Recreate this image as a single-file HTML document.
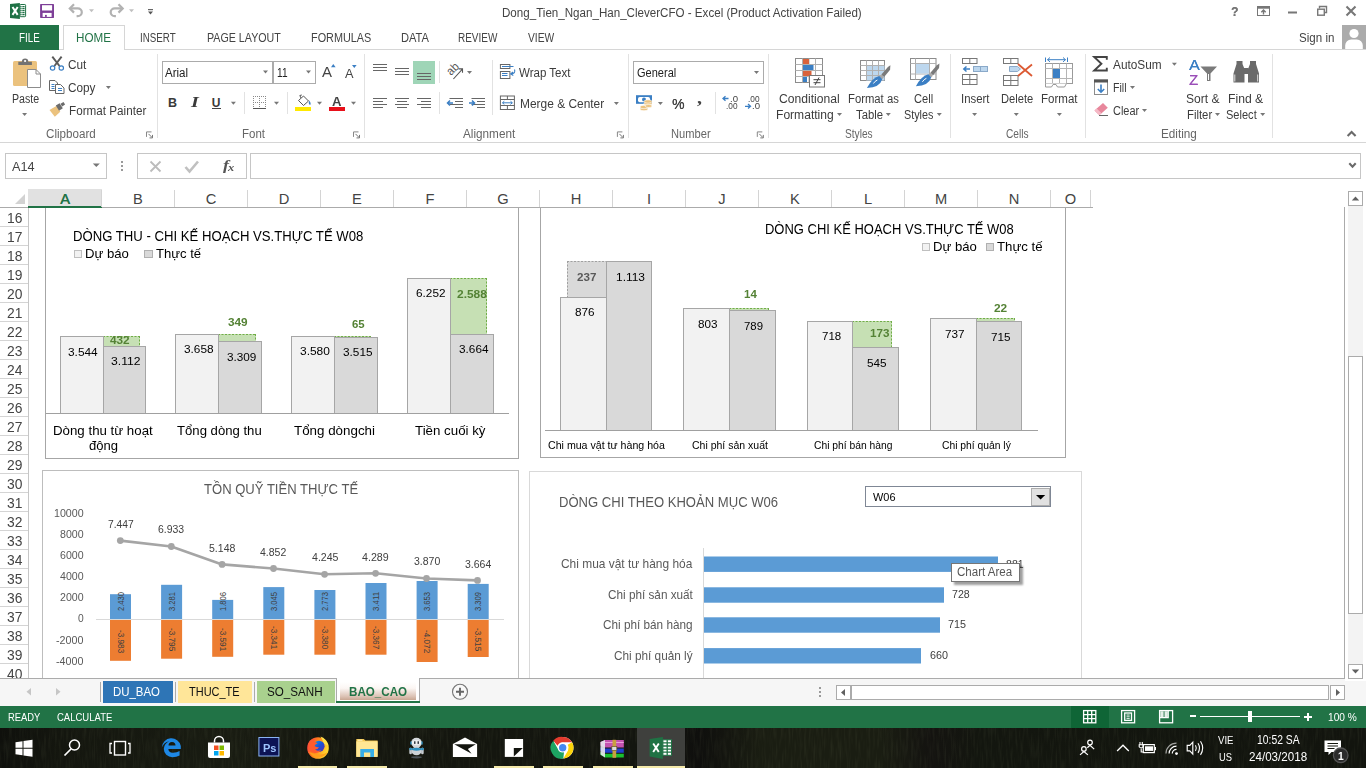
<!DOCTYPE html>
<html><head><meta charset="utf-8">
<style>
*{box-sizing:border-box;margin:0;padding:0}
html,body{width:1366px;height:768px;overflow:hidden;background:#fff}
body{font-family:"Liberation Sans",sans-serif;font-size:12px;color:#444;position:relative}
.a{position:absolute}
.t{position:absolute;white-space:nowrap;line-height:1}
svg{position:absolute;left:0;top:0;overflow:visible;pointer-events:none}
</style></head><body>
<span class="t" style="left:502.00px;top:7.00px;font-size:12.00px;color:#444;transform:scaleX(0.9660);transform-origin:0 0;">Dong_Tien_Ngan_Han_CleverCFO - Excel (Product Activation Failed)</span><svg width="1366" height="768" viewBox="0 0 1366 768"><path d="M10 4L19.900 3V18.900L10 18z" fill="#1e7145"/><rect x="19.900" y="4.500" width="5.700" height="12.200" rx=".8" fill="#fff" stroke="#1e7145" stroke-width="1"/><path d="M20.300 6.600h1.300M22.300 6.600h2.300M20.300 8.600h1.300M22.300 8.600h2.300M20.300 10.600h1.300M22.300 10.600h2.300M20.300 12.600h1.300M22.300 12.600h2.300M20.300 14.600h1.300M22.300 14.600h2.300" stroke="#1e7145" stroke-width="1.200" fill="none"/><path d="M12.500 7l5.200 7.900M17.700 7l-5.200 7.900" stroke="#fff" stroke-width="2" fill="none"/><rect x="40.100" y="4" width="13.900" height="13.900" rx=".6" fill="#7e3f98"/><rect x="42" y="5.200" width="10.100" height="5.300" fill="#fff"/><rect x="42.600" y="12.900" width="9" height="4" fill="#fff"/><rect x="45" y="14.900" width="1.800" height="2" fill="#7e3f98"/><path d="M71 8.400 h6.800 a4 3.900 0 0 1 0 7.800 h-1.200" fill="none" stroke="#b2b2b2" stroke-width="2.2"/><path d="M74 4.200 L69.800 8.400 L74 12.600" fill="none" stroke="#b2b2b2" stroke-width="2.2"/><path d="M121.500 8.400 h-6.800 a4 3.900 0 0 0 0 7.800 h1.200" fill="none" stroke="#b2b2b2" stroke-width="2.2"/><path d="M118.500 4.200 L122.700 8.400 L118.500 12.600" fill="none" stroke="#b2b2b2" stroke-width="2.2"/><path d="M89.0 9.3h5.0l-2.5 3.0z" fill="#c0c0c0"/><path d="M129.0 9.3h5.0l-2.5 3.0z" fill="#c0c0c0"/><rect x="148" y="9" width="5" height="1.2" fill="#666"/><path d="M148.0 11.5h5.0l-2.5 3.0z" fill="#555"/></svg><span class="t" style="left:1231.00px;top:5.00px;font-size:13.20px;color:#777;font-weight:bold;transform:scaleX(0.9054);transform-origin:0 0;text-shadow:.4px 0 0 #777;">?</span><svg width="1366" height="768" viewBox="0 0 1366 768"><rect x="1257.5" y="6.5" width="12" height="9" fill="none" stroke="#777" stroke-width="1"/><rect x="1257.500" y="6.500" width="12" height="2.200" fill="#777"/><path d="M1263.500 14.500v-4.300M1261.300 12.300l2.200-2.200 2.200 2.200" stroke="#777" stroke-width="1.400" fill="none"/><rect x="1288" y="11.5" width="9" height="2" fill="#777"/><path d="M1319.5 8.5v-2h7v6h-2" fill="none" stroke="#777" stroke-width="1.4"/><rect x="1317.7" y="9.2" width="6.6" height="6" fill="none" stroke="#777" stroke-width="1.4"/><path d="M1346.5 6.5l9 9M1355.5 6.5l-9 9" stroke="#777" stroke-width="2.100" fill="none"/></svg><div class="a" style="left:0.00px;top:49.00px;width:1366.00px;height:1.00px;background:#d6d6d6;"></div><div class="a" style="left:0.00px;top:25.00px;width:59.00px;height:25.00px;background:#217346;"></div><div class="a" style="left:63.00px;top:25.00px;width:62.00px;height:25.00px;background:#fff;border:1px solid #d6d6d6;border-bottom:none;"></div><span class="t" style="left:19.30px;top:32.00px;font-size:12.00px;color:#fff;transform:scaleX(0.8169);transform-origin:0 0;">FILE</span><span class="t" style="left:75.80px;top:32.00px;font-size:12.00px;color:#217346;transform:scaleX(0.9722);transform-origin:0 0;">HOME</span><span class="t" style="left:140.20px;top:32.00px;font-size:12.00px;color:#444;transform:scaleX(0.8153);transform-origin:0 0;">INSERT</span><span class="t" style="left:206.50px;top:32.00px;font-size:12.00px;color:#444;transform:scaleX(0.8901);transform-origin:0 0;">PAGE LAYOUT</span><span class="t" style="left:310.60px;top:32.00px;font-size:12.00px;color:#444;transform:scaleX(0.9044);transform-origin:0 0;">FORMULAS</span><span class="t" style="left:400.50px;top:32.00px;font-size:12.00px;color:#444;transform:scaleX(0.9264);transform-origin:0 0;">DATA</span><span class="t" style="left:458.40px;top:32.00px;font-size:12.00px;color:#444;transform:scaleX(0.8323);transform-origin:0 0;">REVIEW</span><span class="t" style="left:527.50px;top:32.00px;font-size:12.00px;color:#444;transform:scaleX(0.8543);transform-origin:0 0;">VIEW</span><span class="t" style="left:1299.00px;top:32.00px;font-size:12.00px;color:#444;transform:scaleX(0.9648);transform-origin:0 0;">Sign in</span><div class="a" style="left:1342.00px;top:25.00px;width:24.00px;height:24.00px;background:#ababab;"></div><svg width="1366" height="768" viewBox="0 0 1366 768"><circle cx="1354" cy="33.5" r="4.6" fill="#fff"/><path d="M1345.2 49v-3.5a6 6 0 0 1 6-6h5.6a6 6 0 0 1 6 6V49z" fill="#fff"/></svg><div class="a" style="left:0.00px;top:142.00px;width:1366.00px;height:1.00px;background:#d6d6d6;"></div><div class="a" style="left:157.00px;top:54.00px;width:1.00px;height:84.00px;background:#e2e2e2;"></div><div class="a" style="left:364.00px;top:54.00px;width:1.00px;height:84.00px;background:#e2e2e2;"></div><div class="a" style="left:628.00px;top:54.00px;width:1.00px;height:84.00px;background:#e2e2e2;"></div><div class="a" style="left:768.00px;top:54.00px;width:1.00px;height:84.00px;background:#e2e2e2;"></div><div class="a" style="left:950.00px;top:54.00px;width:1.00px;height:84.00px;background:#e2e2e2;"></div><div class="a" style="left:1085.00px;top:54.00px;width:1.00px;height:84.00px;background:#e2e2e2;"></div><div class="a" style="left:1272.00px;top:54.00px;width:1.00px;height:84.00px;background:#e2e2e2;"></div><svg width="1366" height="768" viewBox="0 0 1366 768"><rect x="13" y="61" width="24" height="25" rx="1.5" fill="#ebc27e"/><path d="M18.3 65v-3.2h3.6a3.2 3.2 0 0 1 6.4 0h3.6V65z" fill="#737373"/><circle cx="25.1" cy="61" r="1.1" fill="#fff"/><path d="M27.5 69.5h8.5l4.5 4.5v13.5h-13z" fill="#fff" stroke="#8c8c8c" stroke-width="1"/><path d="M36 69.5v4.5h4.5" fill="none" stroke="#8c8c8c"/></svg><span class="t" style="left:11.80px;top:93.00px;font-size:12.00px;color:#3c3c3c;transform:scaleX(0.8864);transform-origin:0 0;">Paste</span><svg width="1366" height="768" viewBox="0 0 1366 768"><path d="M22.1 113.1h5.0l-2.5 3.0z" fill="#777"/><path d="M52.3 56.6l7.2 9.4M61.6 56.6l-7.2 9.4" stroke="#595959" stroke-width="1.900" fill="none"/><circle cx="52.6" cy="68" r="2.2" fill="none" stroke="#3b7fc4" stroke-width="1.2"/><circle cx="61.3" cy="68" r="2.2" fill="none" stroke="#3b7fc4" stroke-width="1.2"/></svg><span class="t" style="left:68.30px;top:59.00px;font-size:12.00px;color:#3c3c3c;transform:scaleX(0.9800);transform-origin:0 0;">Cut</span><svg width="1366" height="768" viewBox="0 0 1366 768"><path d="M49.5 80.5h5.5l2.5 2.5v7.5h-8z" fill="#fff" stroke="#666" stroke-width="1"/><path d="M55.5 84.5h5l3.5 3.5v5.500h-8.500z" fill="#fff" stroke="#666" stroke-width="1"/><path d="M51.500 84.500h3M51.500 86.500h3M51.500 88.500h3M58 88.500h4M58 90.500h4" stroke="#3b7fc4" stroke-width="1"/></svg><span class="t" style="left:68.30px;top:82.00px;font-size:12.00px;color:#3c3c3c;transform:scaleX(0.9781);transform-origin:0 0;">Copy</span><svg width="1366" height="768" viewBox="0 0 1366 768"><path d="M105.9 86.0h5.0l-2.5 3.0z" fill="#777"/><path d="M49.5 110l6.800 -4 4 5.800 -5.500 5z" fill="#ebc27e"/><path d="M55.800 105.600l3.800 -2.300 3.200 5 -3.800 2.500z" fill="#6b6b6b"/><path d="M60.500 103.800l3 -1.800 1.600 2.600 -3 1.800z" fill="#6b6b6b"/></svg><span class="t" style="left:68.70px;top:105.00px;font-size:12.00px;color:#3c3c3c;transform:scaleX(0.9741);transform-origin:0 0;">Format Painter</span><span class="t" style="left:45.80px;top:128.00px;font-size:12.00px;color:#666;transform:scaleX(0.9677);transform-origin:0 0;">Clipboard</span><svg width="1366" height="768" viewBox="0 0 1366 768"><path d="M146.5 136.9v-5h5" fill="none" stroke="#888" stroke-width="1"/><path d="M148.5 133.9l3.500 3.500M152.5 137.9v-3M152.5 137.9h-3" stroke="#777" stroke-width="1" fill="none"/></svg><div class="a" style="left:162.00px;top:61.00px;width:111.00px;height:22.50px;background:#fff;border:1px solid #ababab;"></div><div class="a" style="left:272.50px;top:61.00px;width:43.00px;height:22.50px;background:#fff;border:1px solid #ababab;"></div><span class="t" style="left:164.70px;top:67.00px;font-size:12.00px;color:#222;transform:scaleX(0.9623);transform-origin:0 0;">Arial</span><svg width="1366" height="768" viewBox="0 0 1366 768"><path d="M263.0 70.5h5.0l-2.5 3.0z" fill="#777"/></svg><span class="t" style="left:276.50px;top:67.00px;font-size:12.00px;color:#222;transform:scaleX(0.8430);transform-origin:0 0;">11</span><svg width="1366" height="768" viewBox="0 0 1366 768"><path d="M306.0 70.5h5.0l-2.5 3.0z" fill="#777"/></svg><span class="t" style="left:321.70px;top:64.00px;font-size:15.00px;color:#444;transform:scaleX(0.9995);transform-origin:0 0;">A</span><svg width="1366" height="768" viewBox="0 0 1366 768"><path d="M331 67.300l2.300 -3.300 2.300 3.300z" fill="#3b7fc4"/></svg><span class="t" style="left:345.00px;top:68.00px;font-size:12.50px;color:#444;transform:scaleX(1.0194);transform-origin:0 0;">A</span><svg width="1366" height="768" viewBox="0 0 1366 768"><path d="M352 65l2.300 3 2.300 -3z" fill="#3b7fc4"/></svg><span class="t" style="left:168.00px;top:97.00px;font-size:12.50px;color:#3a3a3a;font-weight:bold;">B</span><span class="t" style="left:190.50px;top:95.00px;font-size:14.80px;color:#3a3a3a;font-weight:bold;font-style:italic;font-family:'Liberation Serif',serif;transform:scaleX(1.3541);transform-origin:0 0;">I</span><span class="t" style="left:211.80px;top:97.00px;font-size:12.00px;color:#3a3a3a;font-weight:bold;">U</span><div class="a" style="left:212.00px;top:108.00px;width:9.00px;height:1.30px;background:#444;"></div><svg width="1366" height="768" viewBox="0 0 1366 768"><path d="M230.9 101.7h5.0l-2.5 3.0z" fill="#777"/></svg><div class="a" style="left:244.00px;top:92.00px;width:1.00px;height:22.00px;background:#e2e2e2;"></div><div class="a" style="left:287.00px;top:92.00px;width:1.00px;height:22.00px;background:#e2e2e2;"></div><svg width="1366" height="768" viewBox="0 0 1366 768"><g stroke="#8a8a8a" stroke-width="1" stroke-dasharray="1 1" fill="none"><path d="M253.500 96v12.500M259.500 96v12.500M265.500 96v12.500M253 96.500h13M253 102.500h13"/></g><path d="M253 108.500h13" stroke="#555" stroke-width="1"/><path d="M274.0 101.7h5.0l-2.5 3.0z" fill="#777"/><path d="M298.500 100.500l5 -4.500 5 5 -5 4.500z" fill="#fff" stroke="#555" stroke-width="1"/><path d="M301 98l-1.200 -2.500 2 -.500" fill="none" stroke="#555"/><path d="M309 100.500q2.500 2.500 1.200 4.500q-2 -.500 -1.200 -4.500z" fill="#3b7fc4"/></svg><div class="a" style="left:295.00px;top:107.00px;width:16.00px;height:3.50px;background:#ffe900;"></div><svg width="1366" height="768" viewBox="0 0 1366 768"><path d="M317.0 101.7h5.0l-2.5 3.0z" fill="#777"/></svg><span class="t" style="left:332.30px;top:95.00px;font-size:13.50px;color:#444;font-weight:bold;transform:scaleX(0.9744);transform-origin:0 0;">A</span><div class="a" style="left:329.00px;top:107.00px;width:16.00px;height:3.50px;background:#e8101a;"></div><svg width="1366" height="768" viewBox="0 0 1366 768"><path d="M351.0 101.7h5.0l-2.5 3.0z" fill="#777"/></svg><span class="t" style="left:241.60px;top:128.00px;font-size:12.00px;color:#666;transform:scaleX(0.9580);transform-origin:0 0;">Font</span><svg width="1366" height="768" viewBox="0 0 1366 768"><path d="M353.5 136.9v-5h5" fill="none" stroke="#888" stroke-width="1"/><path d="M355.5 133.9l3.500 3.500M359.5 137.9v-3M359.5 137.9h-3" stroke="#777" stroke-width="1" fill="none"/><path d="M373.0 64.5H387.0M373.0 67.5H387.0M373.0 70.5H387.0" stroke="#666" stroke-width="1.1" fill="none"/><path d="M395.0 68.5H409.0M395.0 71.5H409.0M395.0 74.5H409.0" stroke="#666" stroke-width="1.1" fill="none"/></svg><div class="a" style="left:413.00px;top:61.00px;width:22.00px;height:22.80px;background:#9fd5b7;"></div><svg width="1366" height="768" viewBox="0 0 1366 768"><path d="M417.0 73.5H431.0M417.0 76.5H431.0M417.0 79.5H431.0" stroke="#666" stroke-width="1.1" fill="none"/></svg><div class="a" style="left:439.00px;top:61.00px;width:1.00px;height:22.00px;background:#e2e2e2;"></div><div class="a" style="left:439.00px;top:92.00px;width:1.00px;height:22.00px;background:#e2e2e2;"></div><div class="a" style="left:492.00px;top:60.00px;width:1.00px;height:54.50px;background:#e2e2e2;"></div><span class="t" style="left:0.00px;top:-10.00px;font-size:12.00px;color:#555;left:444.4px;top:69.2px;transform:rotate(-45deg) scaleX(.92);transform-origin:0 0;">ab</span><svg width="1366" height="768" viewBox="0 0 1366 768"><path d="M453.400 79l9 -9.800M458.600 68.900l3.900 0 0 3.900" stroke="#555" stroke-width="1.1" fill="none"/><path d="M467.0 71.0h5.0l-2.5 3.0z" fill="#777"/><rect x="500.400" y="64.500" width="9.500" height="4" fill="#fff" stroke="#666"/><rect x="500.400" y="71.500" width="9.500" height="7" fill="#fff" stroke="#666"/><path d="M502 66.500h11.500M502 73.500h5.500M502 75.500h5.500" stroke="#3b7fc4" stroke-width="1"/><path d="M514.500 69.500q1.500 4 -3.500 4.500M513 72l-2.300 2 2.600 1.500" stroke="#3b7fc4" fill="none" stroke-width="1.100"/></svg><span class="t" style="left:519.30px;top:67.00px;font-size:12.00px;color:#3c3c3c;transform:scaleX(0.9613);transform-origin:0 0;">Wrap Text</span><svg width="1366" height="768" viewBox="0 0 1366 768"><path d="M373.0 98.5H387.0M373.0 101.5H383.0M373.0 104.5H387.0M373.0 107.5H383.0" stroke="#666" stroke-width="1.1" fill="none"/><path d="M395.0 98.5H409.0M397.0 101.5H407.0M395.0 104.5H409.0M397.0 107.5H407.0" stroke="#666" stroke-width="1.1" fill="none"/><path d="M417.0 98.5H431.0M421.0 101.5H431.0M417.0 104.5H431.0M421.0 107.5H431.0" stroke="#666" stroke-width="1.1" fill="none"/><path d="M449.5 98.5H463.0M455.0 101.5H463.0M449.5 104.5H463.0M455.0 107.5H463.0" stroke="#666" stroke-width="1.1" fill="none"/><path d="M453 103h-5.500M450 100.500l-2.500 2.500 2.500 2.500" stroke="#3b7fc4" stroke-width="1.500" fill="none"/><path d="M471.5 98.5H485.0M477.0 101.5H485.0M471.5 104.5H485.0M477.0 107.5H485.0" stroke="#666" stroke-width="1.1" fill="none"/><path d="M469 103h5.500M472 100.500l2.500 2.500 -2.500 2.500" stroke="#3b7fc4" stroke-width="1.500" fill="none"/><rect x="500.400" y="96" width="14" height="13.500" fill="#fff" stroke="#666"/><path d="M500.400 99.500h14M500.400 105.500h14M507.400 96v3.500M507.400 105.500v4" stroke="#666"/><path d="M502.500 102.800h9.800M504.300 101.200l-1.800 1.600 1.800 1.600M510.500 101.200l1.800 1.600 -1.800 1.600" stroke="#3b7fc4" fill="none" stroke-width="1"/></svg><span class="t" style="left:519.70px;top:98.00px;font-size:12.00px;color:#3c3c3c;transform:scaleX(0.9941);transform-origin:0 0;">Merge &amp; Center</span><svg width="1366" height="768" viewBox="0 0 1366 768"><path d="M613.9 102.0h5.0l-2.5 3.0z" fill="#777"/></svg><span class="t" style="left:462.50px;top:128.00px;font-size:12.00px;color:#666;transform:scaleX(0.9783);transform-origin:0 0;">Alignment</span><svg width="1366" height="768" viewBox="0 0 1366 768"><path d="M617.4 136.9v-5h5" fill="none" stroke="#888" stroke-width="1"/><path d="M619.4 133.9l3.500 3.500M623.4 137.9v-3M623.4 137.9h-3" stroke="#777" stroke-width="1" fill="none"/></svg><div class="a" style="left:633.00px;top:61.00px;width:131.00px;height:22.50px;background:#fff;border:1px solid #ababab;"></div><span class="t" style="left:636.50px;top:67.00px;font-size:12.00px;color:#222;transform:scaleX(0.9183);transform-origin:0 0;">General</span><svg width="1366" height="768" viewBox="0 0 1366 768"><path d="M754.0 71.1h5.0l-2.5 3.0z" fill="#777"/><rect x="636" y="95.200" width="16" height="8.600" fill="#3b7fc4"/><rect x="638" y="97" width="12" height="5.200" rx="1.800" fill="#fff"/><circle cx="644" cy="99.600" r="2" fill="#3b7fc4"/><g fill="#ebc27e" stroke="#fff" stroke-width=".6"><ellipse cx="648" cy="103.500" rx="4" ry="1.700"/><ellipse cx="648" cy="101.500" rx="4" ry="1.700"/><ellipse cx="644" cy="109" rx="4" ry="1.700"/><ellipse cx="644" cy="107" rx="4" ry="1.700"/><ellipse cx="648.500" cy="106" rx="3.500" ry="1.500"/></g><path d="M657.9 102.0h5.0l-2.5 3.0z" fill="#777"/></svg><span class="t" style="left:672.40px;top:96.00px;font-size:15.00px;color:#444;transform:scaleX(0.9297);transform-origin:0 0;text-shadow:.3px 0 0 #444;">%</span><span class="t" style="left:697.00px;top:89.61px;font-size:17.00px;color:#444;font-weight:bold;font-family:'Liberation Serif',serif;transform:scaleX(1.1765);transform-origin:0 0;">,</span><div class="a" style="left:715.00px;top:92.00px;width:1.00px;height:22.00px;background:#e2e2e2;"></div><span class="t" style="left:729.50px;top:95.00px;font-size:8.50px;color:#444;transform:scaleX(1.1286);transform-origin:0 0;">.0</span><span class="t" style="left:726.00px;top:102.00px;font-size:8.50px;color:#444;transform:scaleX(0.9733);transform-origin:0 0;">.00</span><svg width="1366" height="768" viewBox="0 0 1366 768"><path d="M728.500 98.500h-5.500M725.500 96.300l-2.500 2.200 2.500 2.200" stroke="#3b7fc4" stroke-width="1.300" fill="none"/></svg><span class="t" style="left:748.00px;top:95.00px;font-size:8.50px;color:#444;transform:scaleX(0.9733);transform-origin:0 0;">.00</span><span class="t" style="left:751.50px;top:102.00px;font-size:8.50px;color:#444;transform:scaleX(1.1286);transform-origin:0 0;">.0</span><svg width="1366" height="768" viewBox="0 0 1366 768"><path d="M745 106.300h5.500M748 104.100l2.500 2.200 -2.500 2.200" stroke="#3b7fc4" stroke-width="1.300" fill="none"/></svg><span class="t" style="left:670.80px;top:128.00px;font-size:12.00px;color:#666;transform:scaleX(0.9279);transform-origin:0 0;">Number</span><svg width="1366" height="768" viewBox="0 0 1366 768"><path d="M757.3 136.9v-5h5" fill="none" stroke="#888" stroke-width="1"/><path d="M759.3 133.9l3.500 3.500M763.3 137.9v-3M763.3 137.9h-3" stroke="#777" stroke-width="1" fill="none"/><rect x="795.500" y="58.500" width="27" height="24" fill="#fff" stroke="#8c8c8c"/><path d="M802.500 58.500v24M809 58.500v24M815.500 58.500v24M795.500 64.500h27M795.500 70.500h27M795.500 76.500h27" stroke="#b0b0b0" stroke-width="1"/><rect x="803" y="59" width="6" height="5" fill="#d9623b"/><rect x="803" y="65" width="10.500" height="5" fill="#3b7fc4"/><rect x="803" y="71" width="8.500" height="5" fill="#d9623b"/><rect x="803" y="77" width="4" height="5" fill="#3b7fc4"/><rect x="809.500" y="75.500" width="15" height="11.500" fill="#fff" stroke="#777"/><path d="M813.500 79.700h7M813.500 82.700h7M819 77.500l-4 7.500" stroke="#444" stroke-width="1"/></svg><span class="t" style="left:778.60px;top:93.00px;font-size:12.00px;color:#3c3c3c;transform:scaleX(1.0094);transform-origin:0 0;">Conditional</span><span class="t" style="left:775.50px;top:109.00px;font-size:12.00px;color:#3c3c3c;transform:scaleX(1.0062);transform-origin:0 0;">Formatting</span><svg width="1366" height="768" viewBox="0 0 1366 768"><path d="M837.0 113.1h5.0l-2.5 3.0z" fill="#777"/><rect x="860.500" y="60.500" width="24" height="20" fill="#fff" stroke="#8c8c8c"/><rect x="866.500" y="65.500" width="18" height="15" fill="#bdd7ee"/><path d="M866.500 60.500v20M872.500 60.500v20M878.500 60.500v20M860.500 65.500h24M860.500 70.500h24M860.500 75.500h24" stroke="#b0b0b0"/><path d="M881.4 74.5l6.500 -7.500 2.500 -1.800 -.300 4.500 -6 7.300z" fill="#7a7a7a"/><path d="M879.4 76.5l2 -2 2.500 3 -2 2z" fill="#a8a8a8"/><path d="M882.2 79.3Q879.9 87.5 866.9 88.0Q872.4 77.5 879.4 76.0z" fill="#3b7fc4"/><path d="M877.4 80.0q-2.500 1 -4 3.500" stroke="#fff" stroke-width="1" fill="none"/></svg><span class="t" style="left:847.70px;top:93.00px;font-size:12.00px;color:#3c3c3c;transform:scaleX(0.9406);transform-origin:0 0;">Format as</span><span class="t" style="left:855.70px;top:109.00px;font-size:12.00px;color:#3c3c3c;transform:scaleX(0.9412);transform-origin:0 0;">Table</span><svg width="1366" height="768" viewBox="0 0 1366 768"><path d="M885.8 113.1h5.0l-2.5 3.0z" fill="#777"/><rect x="910.500" y="58.500" width="25.500" height="21" fill="#fff" stroke="#8c8c8c"/><path d="M915.500 58.500v21M929.500 58.500v21M910.500 63.500h25.500M910.500 74h25.500" stroke="#b0b0b0"/><rect x="916" y="64" width="13" height="9.500" fill="#bdd7ee"/><path d="M930.4 72.8l6.500 -7.500 2.500 -1.800 -.300 4.500 -6 7.300z" fill="#7a7a7a"/><path d="M928.4 74.8l2 -2 2.500 3 -2 2z" fill="#a8a8a8"/><path d="M931.2 77.6Q928.9 85.8 915.9 86.3Q921.4 75.8 928.4 74.3z" fill="#3b7fc4"/><path d="M926.4 78.3q-2.500 1 -4 3.500" stroke="#fff" stroke-width="1" fill="none"/></svg><span class="t" style="left:913.60px;top:93.00px;font-size:12.00px;color:#3c3c3c;transform:scaleX(0.9240);transform-origin:0 0;">Cell</span><span class="t" style="left:904.40px;top:109.00px;font-size:12.00px;color:#3c3c3c;transform:scaleX(0.8997);transform-origin:0 0;">Styles</span><svg width="1366" height="768" viewBox="0 0 1366 768"><path d="M936.8 113.1h5.0l-2.5 3.0z" fill="#777"/></svg><span class="t" style="left:844.50px;top:128.00px;font-size:12.00px;color:#666;transform:scaleX(0.8446);transform-origin:0 0;">Styles</span><svg width="1366" height="768" viewBox="0 0 1366 768"><rect x="962.5" y="58.5" width="14.5" height="5.0" fill="#fff" stroke="#777"/><path d="M969.8 58.5v5.0" stroke="#777"/><rect x="962.5" y="74.5" width="14.5" height="10.0" fill="#fff" stroke="#777"/><path d="M969.8 74.5v10.0M962.5 79.5h14.5" stroke="#777"/><rect x="973.500" y="66.500" width="14" height="5" fill="#bdd7ee" stroke="#8aa9c9"/><path d="M980.500 66.500v5" stroke="#8aa9c9"/><path d="M970 69h-6M966.500 66.500l-2.700 2.500 2.700 2.500" stroke="#3b7fc4" stroke-width="1.500" fill="none"/></svg><span class="t" style="left:960.50px;top:93.00px;font-size:12.00px;color:#3c3c3c;transform:scaleX(0.9497);transform-origin:0 0;">Insert</span><svg width="1366" height="768" viewBox="0 0 1366 768"><path d="M972.1 113.1h5.0l-2.5 3.0z" fill="#777"/><rect x="1003.5" y="58.5" width="14.5" height="5.0" fill="#fff" stroke="#777"/><path d="M1010.8 58.5v5.0" stroke="#777"/><rect x="1003.5" y="75.5" width="14.5" height="10.0" fill="#fff" stroke="#777"/><path d="M1010.8 75.5v10.0M1003.5 80.5h14.5" stroke="#777"/><path d="M1009.500 66.500h8l3 2.500 -3 2.500h-8z" fill="#bdd7ee" stroke="#8aa9c9"/><path d="M1018 64l14 12M1032 64.500l-14 11.500" stroke="#dc5a33" stroke-width="1.800" fill="none"/></svg><span class="t" style="left:1000.70px;top:93.00px;font-size:12.00px;color:#3c3c3c;transform:scaleX(0.9283);transform-origin:0 0;">Delete</span><svg width="1366" height="768" viewBox="0 0 1366 768"><path d="M1013.8 113.1h5.0l-2.5 3.0z" fill="#777"/><rect x="1045.500" y="63.500" width="27" height="20" fill="#fff" stroke="#9a9a9a"/><path d="M1052.500 63.500v20M1059.500 63.500v20M1066.500 63.500v20M1045.500 68.500h27M1045.500 78.500h27" stroke="#b5b5b5"/><rect x="1053" y="69" width="7" height="9" fill="#3b7fc4"/><path d="M1045.500 83.500v3.500h6l1.500 -2.500h3l1.500 2.500h7l2 -3.500" fill="#fff" stroke="#9a9a9a"/><path d="M1045.500 57.500v4.500M1067.500 57.500v4.500M1047.500 59.700h18M1050 57.500l-2.500 2.200 2.500 2.200M1063 57.500l2.500 2.200 -2.500 2.200" stroke="#3b7fc4" stroke-width="1" fill="none"/></svg><span class="t" style="left:1041.00px;top:93.00px;font-size:12.00px;color:#3c3c3c;transform:scaleX(0.9605);transform-origin:0 0;">Format</span><svg width="1366" height="768" viewBox="0 0 1366 768"><path d="M1056.9 113.1h5.0l-2.5 3.0z" fill="#777"/></svg><span class="t" style="left:1005.70px;top:128.00px;font-size:12.00px;color:#666;transform:scaleX(0.8473);transform-origin:0 0;">Cells</span><svg width="1366" height="768" viewBox="0 0 1366 768"><path d="M1106.800 59.800v-2.800h-12.600l7.200 6.700 -7.200 6.800h12.600v-2.800" fill="none" stroke="#444" stroke-width="1.900"/></svg><span class="t" style="left:1112.80px;top:59.00px;font-size:12.00px;color:#3c3c3c;transform:scaleX(0.9847);transform-origin:0 0;">AutoSum</span><svg width="1366" height="768" viewBox="0 0 1366 768"><path d="M1171.9 62.8h5.0l-2.5 3.0z" fill="#777"/><rect x="1094.500" y="80" width="13" height="14.500" fill="#fff" stroke="#8c8c8c"/><rect x="1094" y="79.500" width="14" height="3" fill="#555"/><path d="M1101 84.500v7.500M1097.800 89l3.200 3.200 3.200 -3.200" stroke="#3b7fc4" stroke-width="1.600" fill="none"/></svg><span class="t" style="left:1112.80px;top:82.00px;font-size:12.00px;color:#3c3c3c;transform:scaleX(0.8873);transform-origin:0 0;">Fill</span><svg width="1366" height="768" viewBox="0 0 1366 768"><path d="M1130.0 86.1h5.0l-2.5 3.0z" fill="#777"/><path d="M1094.500 110.500l8.500 -7.500 4.800 4.800 -8.500 7.500z" fill="#e8879c"/><path d="M1094.500 110.500l2.200 -2 4.800 4.800 -2.200 2z" fill="#f5b9c6"/><path d="M1099 115.500h9" stroke="#666" stroke-width="1"/></svg><span class="t" style="left:1112.80px;top:105.00px;font-size:12.00px;color:#3c3c3c;transform:scaleX(0.9137);transform-origin:0 0;">Clear</span><svg width="1366" height="768" viewBox="0 0 1366 768"><path d="M1142.0 108.9h5.0l-2.5 3.0z" fill="#777"/></svg><span class="t" style="left:1188.50px;top:58.00px;font-size:14.50px;color:#3b7fc4;transform:scaleX(1.1063);transform-origin:0 0;text-shadow:.3px 0 0 #3b7fc4;">A</span><span class="t" style="left:1189.30px;top:73.00px;font-size:14.50px;color:#9b4fb8;transform:scaleX(1.0162);transform-origin:0 0;text-shadow:.3px 0 0 #9b4fb8;">Z</span><svg width="1366" height="768" viewBox="0 0 1366 768"><path d="M1200.500 66.500h16.500l-6.500 7v7.500h-3.500v-7.500z" fill="#7a7a7a"/><path d="M1208.500 74v6" stroke="#fff" stroke-width="1"/></svg><span class="t" style="left:1186.40px;top:93.00px;font-size:12.00px;color:#3c3c3c;transform:scaleX(1.0046);transform-origin:0 0;">Sort &amp;</span><span class="t" style="left:1186.60px;top:109.00px;font-size:12.00px;color:#3c3c3c;transform:scaleX(0.9451);transform-origin:0 0;">Filter</span><svg width="1366" height="768" viewBox="0 0 1366 768"><path d="M1215.0 113.1h5.0l-2.5 3.0z" fill="#777"/><g fill="#6a6a6a"><path d="M1233.500 82.500v-9l3 -9.500v-3h6v3l2 5v13.500z"/><path d="M1259 82.500v-9l-3 -9.500v-3h-6v3l-2 5v13.500z"/><rect x="1244" y="68" width="4.500" height="6"/></g><path d="M1234.800 74.500v7M1257.700 74.500v7" stroke="#fff" stroke-width=".8"/></svg><span class="t" style="left:1228.20px;top:93.00px;font-size:12.00px;color:#3c3c3c;transform:scaleX(1.0150);transform-origin:0 0;">Find &amp;</span><span class="t" style="left:1226.30px;top:109.00px;font-size:12.00px;color:#3c3c3c;transform:scaleX(0.9205);transform-origin:0 0;">Select</span><svg width="1366" height="768" viewBox="0 0 1366 768"><path d="M1260.2 113.1h5.0l-2.5 3.0z" fill="#777"/></svg><span class="t" style="left:1160.70px;top:128.00px;font-size:12.00px;color:#666;transform:scaleX(0.9785);transform-origin:0 0;">Editing</span><svg width="1366" height="768" viewBox="0 0 1366 768"><path d="M1347.600 136l4 -4 4 4" fill="none" stroke="#6a6a6a" stroke-width="2.100"/></svg><div class="a" style="left:45.00px;top:208.00px;width:474.00px;height:251.00px;background:#fff;border:1px solid #a6a6a6;border-top:none;"></div><span class="t" style="left:72.70px;top:229.00px;font-size:14.00px;color:#000;transform:scaleX(0.9384);transform-origin:0 0;">DÒNG THU - CHI KẾ HOẠCH VS.THỰC TẾ W08</span><div class="a" style="left:74.00px;top:250.00px;width:8.00px;height:8.00px;background:#f2f2f2;border:1px solid #bfbfbf;"></div><span class="t" style="left:85.00px;top:247.00px;font-size:13.00px;color:#000;transform:scaleX(1.0118);transform-origin:0 0;">Dự báo</span><div class="a" style="left:144.00px;top:250.00px;width:8.50px;height:8.00px;background:#d9d9d9;border:1px solid #b0b0b0;"></div><span class="t" style="left:155.50px;top:247.00px;font-size:13.00px;color:#000;transform:scaleX(1.0062);transform-origin:0 0;">Thực tế</span><svg width="1366" height="768" viewBox="0 0 1366 768"><rect x="103.0" y="336.0" width="37.0" height="10.0" fill="#c6e0b4"/><path d="M103.0 336.5H140.0M139.5 336.0V346.0" stroke="#70ad47" stroke-width="1" stroke-dasharray="2 1.500" fill="none"/><rect x="60.5" y="336.5" width="43.0" height="77.0" fill="#f2f2f2" stroke="#a6a6a6" stroke-width="1"/><rect x="103.5" y="346.5" width="42.0" height="67.0" fill="#d9d9d9" stroke="#a6a6a6" stroke-width="1"/><rect x="218.0" y="334.0" width="38.0" height="7.0" fill="#c6e0b4"/><path d="M218.0 334.5H256.0M255.5 334.0V341.0" stroke="#70ad47" stroke-width="1" stroke-dasharray="2 1.500" fill="none"/><rect x="175.5" y="334.5" width="43.0" height="79.0" fill="#f2f2f2" stroke="#a6a6a6" stroke-width="1"/><rect x="218.5" y="341.5" width="43.0" height="72.0" fill="#d9d9d9" stroke="#a6a6a6" stroke-width="1"/><rect x="334.0" y="336.0" width="37.0" height="1.0" fill="#c6e0b4"/><path d="M334.0 336.5H371.0M370.5 336.0V337.0" stroke="#70ad47" stroke-width="1" stroke-dasharray="2 1.500" fill="none"/><rect x="291.5" y="336.5" width="43.0" height="77.0" fill="#f2f2f2" stroke="#a6a6a6" stroke-width="1"/><rect x="334.5" y="337.5" width="43.0" height="76.0" fill="#d9d9d9" stroke="#a6a6a6" stroke-width="1"/><rect x="450.0" y="278.0" width="37.0" height="56.0" fill="#c6e0b4"/><path d="M450.0 278.5H487.0M486.5 278.0V334.0" stroke="#70ad47" stroke-width="1" stroke-dasharray="2 1.500" fill="none"/><rect x="407.5" y="278.5" width="43.0" height="135.0" fill="#f2f2f2" stroke="#a6a6a6" stroke-width="1"/><rect x="450.5" y="334.5" width="43.0" height="79.0" fill="#d9d9d9" stroke="#a6a6a6" stroke-width="1"/></svg><div class="a" style="left:46.00px;top:413.00px;width:463.00px;height:1.00px;background:#a0a0a0;"></div><span class="t" style="left:68.00px;top:347.00px;font-size:11.30px;color:#000;transform:scaleX(1.0504);transform-origin:0 0;">3.544</span><span class="t" style="left:110.80px;top:356.00px;font-size:11.30px;color:#000;transform:scaleX(1.0752);transform-origin:0 0;">3.112</span><span class="t" style="left:184.00px;top:344.00px;font-size:11.30px;color:#000;transform:scaleX(1.0469);transform-origin:0 0;">3.658</span><span class="t" style="left:227.00px;top:352.00px;font-size:11.30px;color:#000;transform:scaleX(1.0398);transform-origin:0 0;">3.309</span><span class="t" style="left:299.60px;top:346.00px;font-size:11.30px;color:#000;transform:scaleX(1.0575);transform-origin:0 0;">3.580</span><span class="t" style="left:342.80px;top:347.00px;font-size:11.30px;color:#000;transform:scaleX(1.0433);transform-origin:0 0;">3.515</span><span class="t" style="left:415.50px;top:288.00px;font-size:11.30px;color:#000;transform:scaleX(1.0433);transform-origin:0 0;">6.252</span><span class="t" style="left:458.50px;top:344.00px;font-size:11.30px;color:#000;transform:scaleX(1.0433);transform-origin:0 0;">3.664</span><span class="t" style="left:109.80px;top:335.00px;font-size:10.70px;color:#548235;font-weight:bold;transform:scaleX(1.1036);transform-origin:0 0;">432</span><span class="t" style="left:227.50px;top:317.00px;font-size:10.70px;color:#548235;font-weight:bold;transform:scaleX(1.1036);transform-origin:0 0;">349</span><span class="t" style="left:352.00px;top:319.00px;font-size:10.70px;color:#548235;font-weight:bold;transform:scaleX(1.0672);transform-origin:0 0;">65</span><span class="t" style="left:457.00px;top:289.00px;font-size:10.70px;color:#548235;font-weight:bold;transform:scaleX(1.1168);transform-origin:0 0;">2.588</span><span class="t" style="left:53.30px;top:424.00px;font-size:13.00px;color:#000;transform:scaleX(1.0216);transform-origin:0 0;">Dòng thu từ hoạt</span><span class="t" style="left:88.50px;top:439.00px;font-size:13.00px;color:#000;transform:scaleX(1.0029);transform-origin:0 0;">động</span><span class="t" style="left:176.50px;top:424.00px;font-size:13.00px;color:#000;transform:scaleX(1.0103);transform-origin:0 0;">Tổng dòng thu</span><span class="t" style="left:294.00px;top:424.00px;font-size:13.00px;color:#000;transform:scaleX(1.0283);transform-origin:0 0;">Tổng dòngchi</span><span class="t" style="left:415.00px;top:424.00px;font-size:13.00px;color:#000;transform:scaleX(1.0236);transform-origin:0 0;">Tiền cuối kỳ</span><div class="a" style="left:540.00px;top:208.00px;width:526.00px;height:250.00px;background:#fff;border:1px solid #a6a6a6;border-top:none;"></div><span class="t" style="left:764.70px;top:222.00px;font-size:14.00px;color:#000;transform:scaleX(0.9270);transform-origin:0 0;">DÒNG CHI KẾ HOẠCH VS.THỰC TẾ W08</span><div class="a" style="left:922.00px;top:243.00px;width:8.00px;height:8.00px;background:#f2f2f2;border:1px solid #bfbfbf;"></div><span class="t" style="left:933.00px;top:240.00px;font-size:13.00px;color:#000;transform:scaleX(1.0095);transform-origin:0 0;">Dự báo</span><div class="a" style="left:986.00px;top:243.00px;width:8.00px;height:8.00px;background:#d9d9d9;border:1px solid #b0b0b0;"></div><span class="t" style="left:996.60px;top:240.00px;font-size:13.00px;color:#000;transform:scaleX(1.0173);transform-origin:0 0;">Thực tế</span><svg width="1366" height="768" viewBox="0 0 1366 768"><rect x="567.0" y="261.0" width="40.0" height="36.0" fill="#d9d9d9"/><path d="M567.0 261.5H607.0M567.5 261.0V297.0" stroke="#a0a0a0" stroke-width="1" stroke-dasharray="2 1.500" fill="none"/><rect x="560.5" y="297.5" width="46.0" height="133.0" fill="#f2f2f2" stroke="#a6a6a6" stroke-width="1"/><rect x="606.5" y="261.5" width="45.0" height="169.0" fill="#d9d9d9" stroke="#a6a6a6" stroke-width="1"/><rect x="729.0" y="308.0" width="40.0" height="2.0" fill="#c6e0b4"/><path d="M729.0 308.5H769.0M768.5 308.0V310.0" stroke="#70ad47" stroke-width="1" stroke-dasharray="2 1.500" fill="none"/><rect x="683.5" y="308.5" width="46.0" height="122.0" fill="#f2f2f2" stroke="#a6a6a6" stroke-width="1"/><rect x="729.5" y="310.5" width="46.0" height="120.0" fill="#d9d9d9" stroke="#a6a6a6" stroke-width="1"/><rect x="852.0" y="321.0" width="40.0" height="26.0" fill="#c6e0b4"/><path d="M852.0 321.5H892.0M891.5 321.0V347.0" stroke="#70ad47" stroke-width="1" stroke-dasharray="2 1.500" fill="none"/><rect x="807.5" y="321.5" width="45.0" height="109.0" fill="#f2f2f2" stroke="#a6a6a6" stroke-width="1"/><rect x="852.5" y="347.5" width="46.0" height="83.0" fill="#d9d9d9" stroke="#a6a6a6" stroke-width="1"/><rect x="976.0" y="318.0" width="39.0" height="3.0" fill="#c6e0b4"/><path d="M976.0 318.5H1015.0M1014.5 318.0V321.0" stroke="#70ad47" stroke-width="1" stroke-dasharray="2 1.500" fill="none"/><rect x="930.5" y="318.5" width="46.0" height="112.0" fill="#f2f2f2" stroke="#a6a6a6" stroke-width="1"/><rect x="976.5" y="321.5" width="45.0" height="109.0" fill="#d9d9d9" stroke="#a6a6a6" stroke-width="1"/></svg><div class="a" style="left:545.00px;top:430.00px;width:493.00px;height:1.00px;background:#a0a0a0;"></div><span class="t" style="left:576.60px;top:272.00px;font-size:10.70px;color:#595959;font-weight:bold;transform:scaleX(1.0868);transform-origin:0 0;">237</span><span class="t" style="left:616.00px;top:272.00px;font-size:11.30px;color:#000;transform:scaleX(1.0570);transform-origin:0 0;">1.113</span><span class="t" style="left:574.70px;top:307.00px;font-size:11.30px;color:#000;transform:scaleX(1.0397);transform-origin:0 0;">876</span><span class="t" style="left:743.70px;top:289.00px;font-size:10.70px;color:#548235;font-weight:bold;transform:scaleX(1.0756);transform-origin:0 0;">14</span><span class="t" style="left:698.00px;top:319.00px;font-size:11.30px;color:#000;transform:scaleX(1.0344);transform-origin:0 0;">803</span><span class="t" style="left:744.00px;top:321.00px;font-size:11.30px;color:#000;transform:scaleX(1.0079);transform-origin:0 0;">789</span><span class="t" style="left:822.20px;top:331.00px;font-size:11.30px;color:#000;transform:scaleX(1.0185);transform-origin:0 0;">718</span><span class="t" style="left:869.50px;top:328.00px;font-size:10.70px;color:#548235;font-weight:bold;transform:scaleX(1.0924);transform-origin:0 0;">173</span><span class="t" style="left:867.00px;top:358.00px;font-size:11.30px;color:#000;transform:scaleX(1.0397);transform-origin:0 0;">545</span><span class="t" style="left:993.60px;top:303.00px;font-size:10.70px;color:#548235;font-weight:bold;transform:scaleX(1.1092);transform-origin:0 0;">22</span><span class="t" style="left:945.00px;top:329.00px;font-size:11.30px;color:#000;transform:scaleX(1.0397);transform-origin:0 0;">737</span><span class="t" style="left:990.80px;top:332.00px;font-size:11.30px;color:#000;transform:scaleX(1.0344);transform-origin:0 0;">715</span><span class="t" style="left:547.50px;top:440.00px;font-size:11.30px;color:#000;transform:scaleX(0.9397);transform-origin:0 0;">Chi mua vật tư hàng hóa</span><span class="t" style="left:691.90px;top:440.00px;font-size:11.30px;color:#000;transform:scaleX(0.9295);transform-origin:0 0;">Chi phí sản xuất</span><span class="t" style="left:813.70px;top:440.00px;font-size:11.30px;color:#000;transform:scaleX(0.9121);transform-origin:0 0;">Chi phí bán hàng</span><span class="t" style="left:942.30px;top:440.00px;font-size:11.30px;color:#000;transform:scaleX(0.9128);transform-origin:0 0;">Chi phí quản lý</span><div class="a" style="left:42.00px;top:470.00px;width:477.00px;height:230.00px;background:#fff;border:1px solid #bdbdbd;"></div><span class="t" style="left:203.50px;top:482.00px;font-size:14.00px;color:#595959;transform:scaleX(0.9328);transform-origin:0 0;">TỒN QUỸ TIỀN THỰC TẾ</span><span class="t" style="left:54.00px;top:508.00px;font-size:10.70px;color:#595959;transform:scaleX(0.9949);transform-origin:0 0;">10000</span><span class="t" style="left:60.00px;top:529.00px;font-size:10.70px;color:#595959;transform:scaleX(0.9916);transform-origin:0 0;">8000</span><span class="t" style="left:60.00px;top:550.00px;font-size:10.70px;color:#595959;transform:scaleX(0.9916);transform-origin:0 0;">6000</span><span class="t" style="left:60.00px;top:571.00px;font-size:10.70px;color:#595959;transform:scaleX(0.9916);transform-origin:0 0;">4000</span><span class="t" style="left:60.00px;top:592.00px;font-size:10.70px;color:#595959;transform:scaleX(0.9916);transform-origin:0 0;">2000</span><span class="t" style="left:77.90px;top:613.00px;font-size:10.70px;color:#595959;transform:scaleX(0.9580);transform-origin:0 0;">0</span><span class="t" style="left:56.20px;top:635.00px;font-size:10.70px;color:#595959;transform:scaleX(1.0013);transform-origin:0 0;">-2000</span><span class="t" style="left:56.20px;top:656.00px;font-size:10.70px;color:#595959;transform:scaleX(1.0013);transform-origin:0 0;">-4000</span><svg width="1366" height="768" viewBox="0 0 1366 768"><rect x="110.0" y="594.2" width="21" height="25.3" fill="#5b9bd5"/><rect x="110.0" y="619.5" width="21" height="41.3" fill="#ed7d31"/><rect x="161.1" y="584.8" width="21" height="34.7" fill="#5b9bd5"/><rect x="161.1" y="619.5" width="21" height="39.2" fill="#ed7d31"/><rect x="212.2" y="599.9" width="21" height="19.6" fill="#5b9bd5"/><rect x="212.2" y="619.5" width="21" height="37.3" fill="#ed7d31"/><rect x="263.3" y="587.1" width="21" height="32.4" fill="#5b9bd5"/><rect x="263.3" y="619.5" width="21" height="35.2" fill="#ed7d31"/><rect x="314.4" y="590.0" width="21" height="29.5" fill="#5b9bd5"/><rect x="314.4" y="619.5" width="21" height="35.2" fill="#ed7d31"/><rect x="365.5" y="583.0" width="21" height="36.5" fill="#5b9bd5"/><rect x="365.5" y="619.5" width="21" height="35.2" fill="#ed7d31"/><rect x="416.6" y="581.0" width="21" height="38.5" fill="#5b9bd5"/><rect x="416.6" y="619.5" width="21" height="42.5" fill="#ed7d31"/><rect x="467.7" y="583.9" width="21" height="35.6" fill="#5b9bd5"/><rect x="467.7" y="619.5" width="21" height="37.5" fill="#ed7d31"/><path d="M96 619.5H504" stroke="#d9d9d9" stroke-width="1"/><polyline points="120.3,540.6 171.3,546.5 222.1,564.4 273.5,568.5 324.6,574.3 375.6,573.3 426.5,578.5 477.5,580.4" fill="none" stroke="#a5a5a5" stroke-width="2.600" stroke-linejoin="round"/><circle cx="120.3" cy="540.6" r="3.400" fill="#a5a5a5"/><circle cx="171.3" cy="546.5" r="3.400" fill="#a5a5a5"/><circle cx="222.1" cy="564.4" r="3.400" fill="#a5a5a5"/><circle cx="273.5" cy="568.5" r="3.400" fill="#a5a5a5"/><circle cx="324.6" cy="574.3" r="3.400" fill="#a5a5a5"/><circle cx="375.6" cy="573.3" r="3.400" fill="#a5a5a5"/><circle cx="426.5" cy="578.5" r="3.400" fill="#a5a5a5"/><circle cx="477.5" cy="580.4" r="3.400" fill="#a5a5a5"/></svg><span class="t" style="left:107.60px;top:519.00px;font-size:10.70px;color:#404040;transform:scaleX(0.9599);transform-origin:0 0;">7.447</span><span class="t" style="left:158.40px;top:524.00px;font-size:10.70px;color:#404040;transform:scaleX(0.9786);transform-origin:0 0;">6.933</span><span class="t" style="left:209.40px;top:543.00px;font-size:10.70px;color:#404040;transform:scaleX(0.9861);transform-origin:0 0;">5.148</span><span class="t" style="left:260.20px;top:547.00px;font-size:10.70px;color:#404040;transform:scaleX(0.9823);transform-origin:0 0;">4.852</span><span class="t" style="left:311.50px;top:552.00px;font-size:10.70px;color:#404040;transform:scaleX(0.9898);transform-origin:0 0;">4.245</span><span class="t" style="left:362.30px;top:552.00px;font-size:10.70px;color:#404040;transform:scaleX(0.9973);transform-origin:0 0;">4.289</span><span class="t" style="left:413.70px;top:556.00px;font-size:10.70px;color:#404040;transform:scaleX(0.9823);transform-origin:0 0;">3.870</span><span class="t" style="left:464.50px;top:559.00px;font-size:10.70px;color:#404040;transform:scaleX(0.9823);transform-origin:0 0;">3.664</span><span class="t" style="left:115.60px;top:610.50px;transform:rotate(-90deg) scaleX(0.7993);font-size:9.5px;color:#404040;transform-origin:0 0">2.430</span><span class="t" style="left:125.60px;top:629.50px;transform:rotate(90deg) scaleX(0.8614);font-size:9.5px;color:#404040;transform-origin:0 0">-3.983</span><span class="t" style="left:166.70px;top:610.50px;transform:rotate(-90deg) scaleX(0.7993);font-size:9.5px;color:#404040;transform-origin:0 0">3.281</span><span class="t" style="left:176.70px;top:628.45px;transform:rotate(90deg) scaleX(0.8614);font-size:9.5px;color:#404040;transform-origin:0 0">-3.795</span><span class="t" style="left:217.80px;top:610.50px;transform:rotate(-90deg) scaleX(0.7993);font-size:9.5px;color:#404040;transform-origin:0 0">1.806</span><span class="t" style="left:227.80px;top:627.50px;transform:rotate(90deg) scaleX(0.8614);font-size:9.5px;color:#404040;transform-origin:0 0">-3.591</span><span class="t" style="left:268.90px;top:610.50px;transform:rotate(-90deg) scaleX(0.7993);font-size:9.5px;color:#404040;transform-origin:0 0">3.045</span><span class="t" style="left:278.90px;top:626.45px;transform:rotate(90deg) scaleX(0.8614);font-size:9.5px;color:#404040;transform-origin:0 0">-3.341</span><span class="t" style="left:320.00px;top:610.50px;transform:rotate(-90deg) scaleX(0.7993);font-size:9.5px;color:#404040;transform-origin:0 0">2.773</span><span class="t" style="left:330.00px;top:626.45px;transform:rotate(90deg) scaleX(0.8614);font-size:9.5px;color:#404040;transform-origin:0 0">-3.380</span><span class="t" style="left:371.10px;top:610.50px;transform:rotate(-90deg) scaleX(0.8237);font-size:9.5px;color:#404040;transform-origin:0 0">3.411</span><span class="t" style="left:381.10px;top:626.45px;transform:rotate(90deg) scaleX(0.8614);font-size:9.5px;color:#404040;transform-origin:0 0">-3.367</span><span class="t" style="left:422.20px;top:610.50px;transform:rotate(-90deg) scaleX(0.7993);font-size:9.5px;color:#404040;transform-origin:0 0">3.653</span><span class="t" style="left:432.20px;top:630.10px;transform:rotate(90deg) scaleX(0.8614);font-size:9.5px;color:#404040;transform-origin:0 0">-4.072</span><span class="t" style="left:473.30px;top:610.50px;transform:rotate(-90deg) scaleX(0.7993);font-size:9.5px;color:#404040;transform-origin:0 0">3.309</span><span class="t" style="left:483.30px;top:627.60px;transform:rotate(90deg) scaleX(0.8614);font-size:9.5px;color:#404040;transform-origin:0 0">-3.515</span><div class="a" style="left:529.00px;top:471.00px;width:553.00px;height:230.00px;background:#fff;border:1px solid #d9d9d9;"></div><span class="t" style="left:558.60px;top:495.00px;font-size:14.00px;color:#595959;transform:scaleX(0.9337);transform-origin:0 0;">DÒNG CHI THEO KHOẢN MỤC W06</span><div class="a" style="left:865.00px;top:486.00px;width:186.00px;height:21.00px;background:#fff;border:1px solid #7f8795;"></div><div class="a" style="left:1031.00px;top:488.00px;width:19.00px;height:17.50px;background:#e1e1e1;border:1px solid #adadad;"></div><svg width="1366" height="768" viewBox="0 0 1366 768"><path d="M1036 495h9.200l-4.600 4.600z" fill="#000"/></svg><span class="t" style="left:873.30px;top:492.00px;font-size:10.80px;color:#000;transform:scaleX(1.0132);transform-origin:0 0;">W06</span><div class="a" style="left:703.00px;top:548.00px;width:1.00px;height:131.00px;background:#d9d9d9;"></div><svg width="1366" height="768" viewBox="0 0 1366 768"><rect x="704" y="556.5" width="294.0" height="15.400" fill="#5b9bd5"/><rect x="704" y="587.3" width="240.0" height="15.400" fill="#5b9bd5"/><rect x="704" y="617.3" width="236.0" height="15.400" fill="#5b9bd5"/><rect x="704" y="648.1" width="217.0" height="15.400" fill="#5b9bd5"/></svg><span class="t" style="left:561.00px;top:558.00px;font-size:12.60px;color:#595959;transform:scaleX(0.9473);transform-origin:0 0;">Chi mua vật tư hàng hóa</span><span class="t" style="left:607.50px;top:589.00px;font-size:12.60px;color:#595959;transform:scaleX(0.9325);transform-origin:0 0;">Chi phí sản xuất</span><span class="t" style="left:602.80px;top:619.00px;font-size:12.60px;color:#595959;transform:scaleX(0.9336);transform-origin:0 0;">Chi phí bán hàng</span><span class="t" style="left:613.80px;top:650.00px;font-size:12.60px;color:#595959;transform:scaleX(0.9352);transform-origin:0 0;">Chi phí quản lý</span><span class="t" style="left:1005.50px;top:559.00px;font-size:10.70px;color:#404040;transform:scaleX(0.9916);transform-origin:0 0;">881</span><span class="t" style="left:952.30px;top:589.00px;font-size:10.70px;color:#404040;transform:scaleX(0.9916);transform-origin:0 0;">728</span><span class="t" style="left:948.00px;top:619.00px;font-size:10.70px;color:#404040;transform:scaleX(1.0084);transform-origin:0 0;">715</span><span class="t" style="left:929.50px;top:650.00px;font-size:10.70px;color:#404040;transform:scaleX(1.0084);transform-origin:0 0;">660</span><div class="a" style="left:951.00px;top:563.00px;width:68.50px;height:18.50px;background:#fff;border:1px solid #767676;box-shadow:2.500px 2.500px 2px rgba(0,0,0,.38);"></div><span class="t" style="left:957.40px;top:566.00px;font-size:12.00px;color:#575757;transform:scaleX(0.9623);transform-origin:0 0;">Chart Area</span><div class="a" style="left:5.00px;top:153.00px;width:102.00px;height:26.00px;background:#fff;border:1px solid #c6c6c6;"></div><span class="t" style="left:12.20px;top:161.00px;font-size:12.20px;color:#444;transform:scaleX(1.0412);transform-origin:0 0;">A14</span><svg width="1366" height="768" viewBox="0 0 1366 768"><path d="M92.8 163.6h7.0l-3.5 3.5z" fill="#777"/></svg><div class="a" style="left:121.00px;top:161.00px;width:2.00px;height:2.00px;background:#9a9a9a;"></div><div class="a" style="left:121.00px;top:165.00px;width:2.00px;height:2.00px;background:#9a9a9a;"></div><div class="a" style="left:121.00px;top:169.00px;width:2.00px;height:2.00px;background:#9a9a9a;"></div><div class="a" style="left:137.00px;top:153.00px;width:110.00px;height:26.00px;background:#fff;border:1px solid #c6c6c6;"></div><svg width="1366" height="768" viewBox="0 0 1366 768"><path d="M150.500 161.500l10 10M160.500 161.500l-10 10" stroke="#bcbcbc" stroke-width="1.800" fill="none"/><path d="M185.500 167l4 4.500 8.500 -10" stroke="#c0c0c0" stroke-width="2.600" fill="none"/></svg><span class="t" style="left:222.50px;top:158.00px;font-size:15.00px;color:#555;font-weight:bold;font-style:italic;font-family:'Liberation Serif',serif;transform:scaleX(1.2013);transform-origin:0 0;">f</span><span class="t" style="left:228.30px;top:163.00px;font-size:10.50px;color:#555;font-weight:bold;font-style:italic;font-family:'Liberation Serif',serif;transform:scaleX(1.1810);transform-origin:0 0;">x</span><div class="a" style="left:250.00px;top:153.00px;width:1111.00px;height:26.00px;background:#fff;border:1px solid #c6c6c6;"></div><svg width="1366" height="768" viewBox="0 0 1366 768"><path d="M1349.300 163.300l3.200 3.400 3.200 -3.400" fill="none" stroke="#6a6a6a" stroke-width="2.100"/></svg><div class="a" style="left:0.00px;top:207.00px;width:1093.00px;height:1.00px;background:#ababab;"></div><div class="a" style="left:28.00px;top:189.00px;width:74.00px;height:18.00px;background:#e1e1e1;"></div><div class="a" style="left:28.00px;top:206.00px;width:74.00px;height:2.00px;background:#217346;"></div><svg width="1366" height="768" viewBox="0 0 1366 768"><path d="M25 194v10h-10z" fill="#d2d2d2"/></svg><span class="t" style="left:60.10px;top:192.00px;font-size:14.70px;color:#217346;text-shadow:.5px 0 0 #217346;">A</span><div class="a" style="left:101.00px;top:190.00px;width:1.00px;height:17.00px;background:#d4d4d4;"></div><span class="t" style="left:133.10px;top:192.00px;font-size:14.70px;color:#444;">B</span><div class="a" style="left:174.00px;top:190.00px;width:1.00px;height:17.00px;background:#d4d4d4;"></div><span class="t" style="left:205.69px;top:192.00px;font-size:14.70px;color:#444;">C</span><div class="a" style="left:247.00px;top:190.00px;width:1.00px;height:17.00px;background:#d4d4d4;"></div><span class="t" style="left:278.69px;top:192.00px;font-size:14.70px;color:#444;">D</span><div class="a" style="left:320.00px;top:190.00px;width:1.00px;height:17.00px;background:#d4d4d4;"></div><span class="t" style="left:352.10px;top:192.00px;font-size:14.70px;color:#444;">E</span><div class="a" style="left:393.00px;top:190.00px;width:1.00px;height:17.00px;background:#d4d4d4;"></div><span class="t" style="left:425.51px;top:192.00px;font-size:14.70px;color:#444;">F</span><div class="a" style="left:466.00px;top:190.00px;width:1.00px;height:17.00px;background:#d4d4d4;"></div><span class="t" style="left:497.28px;top:192.00px;font-size:14.70px;color:#444;">G</span><div class="a" style="left:539.00px;top:190.00px;width:1.00px;height:17.00px;background:#d4d4d4;"></div><span class="t" style="left:570.69px;top:192.00px;font-size:14.70px;color:#444;">H</span><div class="a" style="left:612.00px;top:190.00px;width:1.00px;height:17.00px;background:#d4d4d4;"></div><span class="t" style="left:646.96px;top:192.00px;font-size:14.70px;color:#444;">I</span><div class="a" style="left:685.00px;top:190.00px;width:1.00px;height:17.00px;background:#d4d4d4;"></div><span class="t" style="left:718.33px;top:192.00px;font-size:14.70px;color:#444;">J</span><div class="a" style="left:758.00px;top:190.00px;width:1.00px;height:17.00px;background:#d4d4d4;"></div><span class="t" style="left:790.10px;top:192.00px;font-size:14.70px;color:#444;">K</span><div class="a" style="left:831.00px;top:190.00px;width:1.00px;height:17.00px;background:#d4d4d4;"></div><span class="t" style="left:863.91px;top:192.00px;font-size:14.70px;color:#444;">L</span><div class="a" style="left:904.00px;top:190.00px;width:1.00px;height:17.00px;background:#d4d4d4;"></div><span class="t" style="left:934.88px;top:192.00px;font-size:14.70px;color:#444;">M</span><div class="a" style="left:977.00px;top:190.00px;width:1.00px;height:17.00px;background:#d4d4d4;"></div><span class="t" style="left:1008.69px;top:192.00px;font-size:14.70px;color:#444;">N</span><div class="a" style="left:1050.00px;top:190.00px;width:1.00px;height:17.00px;background:#d4d4d4;"></div><span class="t" style="left:1064.78px;top:192.00px;font-size:14.70px;color:#444;">O</span><div class="a" style="left:1090.00px;top:190.00px;width:1.00px;height:17.00px;background:#d4d4d4;"></div><div class="a" style="left:28.00px;top:208.00px;width:1.00px;height:470.00px;background:#c6c6c6;"></div><div class="a" style="left:0.00px;top:226.00px;width:28.00px;height:1.00px;background:#d4d4d4;"></div><span class="t" style="left:6.80px;top:211.00px;font-size:14.70px;color:#444;transform:scaleX(0.9419);transform-origin:0 0;">16</span><div class="a" style="left:0.00px;top:245.00px;width:28.00px;height:1.00px;background:#d4d4d4;"></div><span class="t" style="left:6.80px;top:230.00px;font-size:14.70px;color:#444;transform:scaleX(0.9419);transform-origin:0 0;">17</span><div class="a" style="left:0.00px;top:264.00px;width:28.00px;height:1.00px;background:#d4d4d4;"></div><span class="t" style="left:6.80px;top:249.00px;font-size:14.70px;color:#444;transform:scaleX(0.9419);transform-origin:0 0;">18</span><div class="a" style="left:0.00px;top:283.00px;width:28.00px;height:1.00px;background:#d4d4d4;"></div><span class="t" style="left:6.80px;top:268.00px;font-size:14.70px;color:#444;transform:scaleX(0.9419);transform-origin:0 0;">19</span><div class="a" style="left:0.00px;top:302.00px;width:28.00px;height:1.00px;background:#d4d4d4;"></div><span class="t" style="left:6.80px;top:287.00px;font-size:14.70px;color:#444;transform:scaleX(0.9419);transform-origin:0 0;">20</span><div class="a" style="left:0.00px;top:321.00px;width:28.00px;height:1.00px;background:#d4d4d4;"></div><span class="t" style="left:6.80px;top:306.00px;font-size:14.70px;color:#444;transform:scaleX(0.9419);transform-origin:0 0;">21</span><div class="a" style="left:0.00px;top:340.00px;width:28.00px;height:1.00px;background:#d4d4d4;"></div><span class="t" style="left:6.80px;top:325.00px;font-size:14.70px;color:#444;transform:scaleX(0.9419);transform-origin:0 0;">22</span><div class="a" style="left:0.00px;top:359.00px;width:28.00px;height:1.00px;background:#d4d4d4;"></div><span class="t" style="left:6.80px;top:344.00px;font-size:14.70px;color:#444;transform:scaleX(0.9419);transform-origin:0 0;">23</span><div class="a" style="left:0.00px;top:378.00px;width:28.00px;height:1.00px;background:#d4d4d4;"></div><span class="t" style="left:6.80px;top:363.00px;font-size:14.70px;color:#444;transform:scaleX(0.9419);transform-origin:0 0;">24</span><div class="a" style="left:0.00px;top:397.00px;width:28.00px;height:1.00px;background:#d4d4d4;"></div><span class="t" style="left:6.80px;top:382.00px;font-size:14.70px;color:#444;transform:scaleX(0.9419);transform-origin:0 0;">25</span><div class="a" style="left:0.00px;top:416.00px;width:28.00px;height:1.00px;background:#d4d4d4;"></div><span class="t" style="left:6.80px;top:401.00px;font-size:14.70px;color:#444;transform:scaleX(0.9419);transform-origin:0 0;">26</span><div class="a" style="left:0.00px;top:435.00px;width:28.00px;height:1.00px;background:#d4d4d4;"></div><span class="t" style="left:6.80px;top:420.00px;font-size:14.70px;color:#444;transform:scaleX(0.9419);transform-origin:0 0;">27</span><div class="a" style="left:0.00px;top:454.00px;width:28.00px;height:1.00px;background:#d4d4d4;"></div><span class="t" style="left:6.80px;top:439.00px;font-size:14.70px;color:#444;transform:scaleX(0.9419);transform-origin:0 0;">28</span><div class="a" style="left:0.00px;top:473.00px;width:28.00px;height:1.00px;background:#d4d4d4;"></div><span class="t" style="left:6.80px;top:458.00px;font-size:14.70px;color:#444;transform:scaleX(0.9419);transform-origin:0 0;">29</span><div class="a" style="left:0.00px;top:492.00px;width:28.00px;height:1.00px;background:#d4d4d4;"></div><span class="t" style="left:6.80px;top:477.00px;font-size:14.70px;color:#444;transform:scaleX(0.9419);transform-origin:0 0;">30</span><div class="a" style="left:0.00px;top:511.00px;width:28.00px;height:1.00px;background:#d4d4d4;"></div><span class="t" style="left:6.80px;top:496.00px;font-size:14.70px;color:#444;transform:scaleX(0.9419);transform-origin:0 0;">31</span><div class="a" style="left:0.00px;top:530.00px;width:28.00px;height:1.00px;background:#d4d4d4;"></div><span class="t" style="left:6.80px;top:515.00px;font-size:14.70px;color:#444;transform:scaleX(0.9419);transform-origin:0 0;">32</span><div class="a" style="left:0.00px;top:549.00px;width:28.00px;height:1.00px;background:#d4d4d4;"></div><span class="t" style="left:6.80px;top:534.00px;font-size:14.70px;color:#444;transform:scaleX(0.9419);transform-origin:0 0;">33</span><div class="a" style="left:0.00px;top:568.00px;width:28.00px;height:1.00px;background:#d4d4d4;"></div><span class="t" style="left:6.80px;top:553.00px;font-size:14.70px;color:#444;transform:scaleX(0.9419);transform-origin:0 0;">34</span><div class="a" style="left:0.00px;top:587.00px;width:28.00px;height:1.00px;background:#d4d4d4;"></div><span class="t" style="left:6.80px;top:572.00px;font-size:14.70px;color:#444;transform:scaleX(0.9419);transform-origin:0 0;">35</span><div class="a" style="left:0.00px;top:606.00px;width:28.00px;height:1.00px;background:#d4d4d4;"></div><span class="t" style="left:6.80px;top:591.00px;font-size:14.70px;color:#444;transform:scaleX(0.9419);transform-origin:0 0;">36</span><div class="a" style="left:0.00px;top:625.00px;width:28.00px;height:1.00px;background:#d4d4d4;"></div><span class="t" style="left:6.80px;top:610.00px;font-size:14.70px;color:#444;transform:scaleX(0.9419);transform-origin:0 0;">37</span><div class="a" style="left:0.00px;top:644.00px;width:28.00px;height:1.00px;background:#d4d4d4;"></div><span class="t" style="left:6.80px;top:629.00px;font-size:14.70px;color:#444;transform:scaleX(0.9419);transform-origin:0 0;">38</span><div class="a" style="left:0.00px;top:663.00px;width:28.00px;height:1.00px;background:#d4d4d4;"></div><span class="t" style="left:6.80px;top:648.00px;font-size:14.70px;color:#444;transform:scaleX(0.9419);transform-origin:0 0;">39</span><span class="t" style="left:6.80px;top:667.00px;font-size:14.70px;color:#444;transform:scaleX(0.9419);transform-origin:0 0;">40</span><div class="a" style="left:0.00px;top:678.00px;width:1345.00px;height:28.00px;background:#f6f6f6;"></div><div class="a" style="left:1345.00px;top:681.00px;width:21.00px;height:25.00px;background:#f6f6f6;"></div><div class="a" style="left:0.00px;top:678.00px;width:1345.00px;height:1.00px;background:#ababab;"></div><div class="a" style="left:1344.00px;top:207.00px;width:1.00px;height:472.00px;background:#ababab;"></div><div class="a" style="left:1348.00px;top:191.00px;width:15.00px;height:488.00px;background:#f3f3f3;"></div><div class="a" style="left:1348.00px;top:191.00px;width:15.00px;height:15.00px;background:#fff;border:1px solid #ababab;"></div><svg width="1366" height="768" viewBox="0 0 1366 768"><path d="M1351.800 200.500l3.700 -4 3.700 4z" fill="#606060"/></svg><div class="a" style="left:1348.00px;top:356.00px;width:15.00px;height:258.00px;background:#fff;border:1px solid #ababab;"></div><div class="a" style="left:1348.00px;top:664.00px;width:15.00px;height:15.00px;background:#fff;border:1px solid #ababab;"></div><svg width="1366" height="768" viewBox="0 0 1366 768"><path d="M1351.800 669.500l3.700 4 3.700 -4z" fill="#606060"/><path d="M31 688l-4.500 3.700 4.500 3.700z" fill="#c6c6c6"/><path d="M56 688l4.500 3.700 -4.500 3.700z" fill="#c6c6c6"/></svg><div class="a" style="left:100.00px;top:681.50px;width:1.00px;height:20.50px;background:#ababab;"></div><div class="a" style="left:175.00px;top:681.50px;width:1.00px;height:20.50px;background:#ababab;"></div><div class="a" style="left:254.00px;top:681.50px;width:1.00px;height:20.50px;background:#ababab;"></div><div class="a" style="left:103.00px;top:681.00px;width:70.00px;height:22.00px;background:#2e75b6;"></div><span class="t" style="left:113.20px;top:685.00px;font-size:13.00px;color:#fff;transform:scaleX(0.8792);transform-origin:0 0;">DU_BAO</span><div class="a" style="left:178.00px;top:681.00px;width:74.00px;height:22.00px;background:#ffe699;"></div><span class="t" style="left:189.00px;top:685.00px;font-size:13.00px;color:#111;transform:scaleX(0.8441);transform-origin:0 0;">THUC_TE</span><div class="a" style="left:256.50px;top:681.00px;width:78.00px;height:22.00px;background:#a9d18e;"></div><span class="t" style="left:267.40px;top:685.00px;font-size:13.00px;color:#111;transform:scaleX(0.8949);transform-origin:0 0;">SO_SANH</span><div class="a" style="left:336.00px;top:678.00px;width:84.00px;height:25.00px;background:#fff;border:1px solid #ababab;border-top:none;border-bottom:none;"></div><div class="a" style="left:339.50px;top:681.50px;width:76.00px;height:18.00px;background:linear-gradient(#fff 0%,#fbf6f3 35%,#dcc2b4 80%,#c9a792 100%);"></div><div class="a" style="left:336.00px;top:701.00px;width:84.00px;height:2.00px;background:#217346;"></div><span class="t" style="left:348.80px;top:685.00px;font-size:13.00px;color:#217346;font-weight:bold;transform:scaleX(0.8938);transform-origin:0 0;">BAO_CAO</span><svg width="1366" height="768" viewBox="0 0 1366 768"><circle cx="460" cy="691.800" r="7.500" fill="#f8f8f8" stroke="#777" stroke-width="1.100"/><path d="M456 691.800h8M460 687.800v8" stroke="#666" stroke-width="1.900"/></svg><div class="a" style="left:819.00px;top:687.00px;width:2.00px;height:2.00px;background:#9a9a9a;"></div><div class="a" style="left:819.00px;top:691.00px;width:2.00px;height:2.00px;background:#9a9a9a;"></div><div class="a" style="left:819.00px;top:695.00px;width:2.00px;height:2.00px;background:#9a9a9a;"></div><div class="a" style="left:836.00px;top:685.00px;width:15.00px;height:15.00px;background:#fff;border:1px solid #ababab;"></div><svg width="1366" height="768" viewBox="0 0 1366 768"><path d="M845 689l-4 3.500 4 3.500z" fill="#606060"/></svg><div class="a" style="left:851.00px;top:685.00px;width:478.00px;height:15.00px;background:#fff;border:1px solid #ababab;"></div><div class="a" style="left:1330.00px;top:685.00px;width:15.00px;height:15.00px;background:#fff;border:1px solid #ababab;"></div><svg width="1366" height="768" viewBox="0 0 1366 768"><path d="M1336 689l4 3.500 -4 3.500z" fill="#606060"/></svg><div class="a" style="left:0.00px;top:706.00px;width:1366.00px;height:22.00px;background:#217346;"></div><span class="t" style="left:7.60px;top:712.00px;font-size:11.30px;color:#fff;transform:scaleX(0.8322);transform-origin:0 0;">READY</span><span class="t" style="left:56.80px;top:712.00px;font-size:11.30px;color:#fff;transform:scaleX(0.8414);transform-origin:0 0;">CALCULATE</span><div class="a" style="left:1071.00px;top:706.00px;width:38.00px;height:22.00px;background:#0f6536;"></div><svg width="1366" height="768" viewBox="0 0 1366 768"><g stroke="#fff" fill="none" stroke-width="1.300"><rect x="1083.600" y="710.600" width="12.200" height="12.200"/><path d="M1087.700 710.600v12.200M1091.700 710.600v12.200M1083.600 714.700h12.200M1083.600 718.700h12.200"/></g><g stroke="#fff" fill="none" stroke-width="1.300"><rect x="1121.600" y="710.600" width="13" height="12.200"/><rect x="1124.700" y="713" width="6.800" height="7.400"/><path d="M1126.500 715h3.200M1126.500 716.800h3.200M1126.500 718.600h3.200" stroke-width=".9"/></g><g stroke="#fff" fill="none" stroke-width="1.300"><rect x="1159.600" y="710.600" width="13" height="12.200"/><path d="M1159.600 717.700h8.600v-7"/></g><rect x="1160.300" y="711.200" width="3.300" height="6" fill="#e4efe8"/><rect x="1164.500" y="711.200" width="3.300" height="6" fill="#e4efe8"/></svg><div class="a" style="left:1190.30px;top:715.30px;width:5.80px;height:2.20px;background:#fff;"></div><div class="a" style="left:1200.00px;top:716.00px;width:100.00px;height:1.00px;background:#fff;"></div><div class="a" style="left:1248.20px;top:711.20px;width:3.80px;height:10.80px;background:#fff;"></div><div class="a" style="left:1304.20px;top:715.80px;width:8.00px;height:2.00px;background:#fff;"></div><div class="a" style="left:1307.20px;top:712.80px;width:2.00px;height:8.00px;background:#fff;"></div><span class="t" style="left:1328.00px;top:712.00px;font-size:11.30px;color:#fff;transform:scaleX(0.8989);transform-origin:0 0;">100 %</span><div class="a" style="left:0.00px;top:728.00px;width:1366.00px;height:40.00px;background:linear-gradient(90deg,#0f100c 0,#14160f 60px,#191c12 230px,#15170f 340px,#13150f 640px,#0f0f0d 700px,#1a1d12 760px,#1a1d12 880px,#141310 930px,#13160f 980px,#12140e 1366px);"></div><svg width="1366" height="768" viewBox="0 0 1366 768"><defs><filter id="gr" x="0" y="0" width="100%" height="100%"><feTurbulence type="fractalNoise" baseFrequency=".45 .05" numOctaves="2" seed="4"/><feColorMatrix values="0 0 0 0 .16  0 0 0 0 .18  0 0 0 0 .1  0 0 0 .9 -.38"/></filter></defs><rect x="0" y="728" width="1366" height="40" filter="url(#gr)" opacity=".32"/></svg><div class="a" style="left:637.00px;top:728.00px;width:48.00px;height:40.00px;background:#3f403d;"></div><div class="a" style="left:298.00px;top:766.00px;width:39.00px;height:2.00px;background:#f4e9a9;"></div><div class="a" style="left:347.00px;top:766.00px;width:40.00px;height:2.00px;background:#f4e9a9;"></div><div class="a" style="left:494.00px;top:766.00px;width:39.50px;height:2.00px;background:#f4e9a9;"></div><div class="a" style="left:543.00px;top:766.00px;width:40.00px;height:2.00px;background:#f4e9a9;"></div><div class="a" style="left:592.50px;top:766.00px;width:40.00px;height:2.00px;background:#f4e9a9;"></div><div class="a" style="left:637.00px;top:766.00px;width:48.00px;height:2.00px;background:#f4e9a9;"></div><svg width="1366" height="768" viewBox="0 0 1366 768"><g fill="#fff"><path d="M15.500 742.200l7 -1v6.500h-7z"/><path d="M23.500 741l9 -1.300v8h-9z"/><path d="M15.500 748.700h7v6.500l-7 -1z"/><path d="M23.500 748.700h9v8l-9 -1.300z"/></g><circle cx="74.500" cy="745" r="5" fill="none" stroke="#fff" stroke-width="1.500"/><path d="M71 749l-6.500 6.500" stroke="#fff" stroke-width="1.700"/><rect x="114.500" y="741.500" width="11" height="13.500" fill="none" stroke="#fff" stroke-width="1.400"/><path d="M112 743.500h-2v9.500h2M128 743.500h2v9.500h-2" fill="none" stroke="#fff" stroke-width="1.300"/><path d="M161.800 747.500a9.600 9.600 0 0 1 19 -1.500v3h-12.500a4.500 4.500 0 0 0 4.800 3.800q3.800 0 6.500 -1.700v4.300q-3 1.800 -7.300 1.800a8.500 8.500 0 0 1 -8.500 -8.500a9 9 0 0 1 5.500 -7.500q-5.500 1 -7.500 6.300zM168.500 745.500h7a3.500 3.500 0 0 0 -7 0z" fill="#1e88e5" fill-rule="evenodd"/><path d="M208 742.500h22v13.500a2 2 0 0 1 -2 2h-18a2 2 0 0 1 -2 -2z" fill="#fff"/><path d="M214.500 742.500v-1.500a4.500 4.500 0 0 1 9 0v1.500" fill="none" stroke="#fff" stroke-width="1.500"/><rect x="214" y="745.500" width="4.500" height="4.500" fill="#f25022"/><rect x="219.500" y="745.500" width="4.500" height="4.500" fill="#7fba00"/><rect x="214" y="751" width="4.500" height="4.500" fill="#00a4ef"/><rect x="219.500" y="751" width="4.500" height="4.500" fill="#ffb900"/><rect x="258.900" y="737.500" width="20" height="18.500" fill="#0d1455" stroke="#8ab4f4" stroke-width="1"/></svg><span class="t" style="left:262.50px;top:743.00px;font-size:11.50px;color:#9ec5ff;font-weight:bold;transform:scaleX(0.9598);transform-origin:0 0;">Ps</span><svg width="1366" height="768" viewBox="0 0 1366 768"><defs><linearGradient id="ffg" x1="0" y1="0" x2="1" y2="0.35"><stop offset="0" stop-color="#ff2f54"/><stop offset=".45" stop-color="#ff7a1a"/><stop offset="1" stop-color="#ffd52e"/></linearGradient><linearGradient id="ffb" x1="0" y1="0" x2="1" y2="1"><stop offset="0" stop-color="#00a5f0"/><stop offset=".5" stop-color="#1c4fd8"/><stop offset="1" stop-color="#5a2fa8"/></linearGradient></defs><circle cx="318" cy="748" r="10.800" fill="url(#ffg)"/><path d="M320.500 736.500q6 2 8 9l-4.500 -1.500q-1 -4 -3.500 -7.500z" fill="#ffe14a"/><circle cx="319" cy="746.300" r="5.600" fill="url(#ffb)"/><path d="M309.500 741.500q2.500 -3 5.500 -3q-1 2 -.5 3.500q2 .3 3 1.500q-2.500 .5 -3 2.500q1.500 1.500 4.500 1q-1 2.500 -4 2.500q2 2 6 .5q-2 3.500 -6.500 3q-5 -1 -6 -6q-.5 -4 1 -5.500z" fill="#ff5b2e"/><path d="M309 752q4 6 10 5.500q6 -.5 9 -6q-3 3 -8 3t-11 -2.500z" fill="#ff9f1a"/><path d="M356.300 739h7.500l1.500 1.500h12.300v16.300h-21.300z" fill="#f3c64d"/><path d="M356.300 741.300h21.300v15.600h-21.300z" fill="#ffe794"/><rect x="357.500" y="739.700" width="5" height="1" fill="#fff7d0"/><path d="M360.300 749h13.700v7.900h-3.700v-4.400h-6.300v4.400h-3.700z" fill="#38aee8"/><ellipse cx="416.500" cy="742.800" rx="5.300" ry="5" fill="#d5d9dd"/><path d="M411.500 741.500q5 -3 10 0v2.500q-5 2 -10 0z" fill="#eef0f2"/><rect x="414" y="741.300" width="1.500" height="2.600" fill="#333b44"/><rect x="417.500" y="741.300" width="1.500" height="2.600" fill="#333b44"/><rect x="410.300" y="741.500" width="1.300" height="3" fill="#2a8fc0"/><rect x="421.400" y="741.500" width="1.300" height="3" fill="#2a8fc0"/><ellipse cx="416.500" cy="751" rx="5" ry="4.300" fill="#cdd2d7"/><path d="M412 748.500q4.500 -1.500 9 0v1.500q-4.500 1.300 -9 0z" fill="#2a8fc0"/><rect x="409.300" y="747.800" width="2.600" height="6.500" rx="1.300" fill="#c5cacf"/><rect x="421.100" y="747.800" width="2.600" height="6.500" rx="1.300" fill="#c5cacf"/><rect x="409.300" y="747.800" width="2.600" height="2.400" rx="1" fill="#2a8fc0"/><rect x="421.100" y="747.800" width="2.600" height="2.400" rx="1" fill="#2a8fc0"/><ellipse cx="416.500" cy="757.300" rx="5.300" ry="1.100" fill="#4b5258"/><path d="M452.900 744l12.100 -6.500 12.100 6.500v12.900h-24.200z" fill="#fff"/><path d="M454.200 744.300h21.600l-7.900 4.700 3.700 4.700z" fill="#13150f"/><rect x="504.800" y="739" width="18.300" height="17.900" fill="#fff"/><path d="M513.800 748.100h9l-9 8.300z" fill="#13150f"/><circle cx="562.700" cy="747.700" r="10.800" fill="#fff"/><path d="M562.700 736.900a10.800 10.800 0 0 1 9.350 5.400h-9.350a5.400 5.400 0 0 0 -5.050 3.500l-4.400 -5a10.800 10.800 0 0 1 9.450 -3.900z" fill="#e33b2e"/><path d="M572.050 742.300a10.800 10.800 0 0 1 -8.700 16.200l4.700 -8.100a5.400 5.400 0 0 0 -.35 -5.600z" fill="#fdd308" /><path d="M563.350 758.500a10.800 10.800 0 0 1 -10.100 -17.700l4.400 7.600a5.400 5.400 0 0 0 6.400 3.300z" fill="#1da462"/><circle cx="562.700" cy="747.700" r="4.300" fill="#4688f1" stroke="#fff" stroke-width="1.200"/><path d="M600.500 742l4.500 -2h18.800v7.400h-18.800l-4.500 -2z" fill="#c452b0"/><path d="M600.500 747.500l4.500 1h18.800v4.300h-18.800l-4.500 -2z" fill="#1f3fd0"/><path d="M600.500 752l4.500 1.800h18.800v3.800h-18.800l-4.500 -2.500z" fill="#18c030"/><path d="M600.500 742l4.500 -2v17.600l-4.500 -3z" fill="#e8e8f0" opacity=".9"/><path d="M605 742.500h18.800" stroke="#e9a0dc" stroke-width="1"/><rect x="612.500" y="739.800" width="3.700" height="18" fill="#c9a040"/><rect x="611.800" y="746.500" width="5" height="4" fill="#dcdcdc" stroke="#6b5520" stroke-width=".7"/><path d="M649.600 739l13.300 -2.100v22.100l-13.300 -2.600z" fill="#1f7244"/><rect x="662.900" y="739.800" width="8.600" height="15.500" fill="#fff" stroke="#1f7244" stroke-width="1"/><path d="M667.200 739.800v15.500M662.900 742.900h8.600M662.900 746h8.600M662.900 749.100h8.600M662.900 752.200h8.600" stroke="#1f7244" stroke-width="1.300"/><path d="M653.200 743.500l5.600 8.500M658.800 743.500l-5.600 8.500" stroke="#fff" stroke-width="1.900"/><g fill="none" stroke="#fff" stroke-width="1.200"><circle cx="1090" cy="742.500" r="2.300"/><path d="M1087.300 747.800l2.700 -2.400 4.200 3.700"/><circle cx="1083.900" cy="748.900" r="2.300"/><path d="M1080 754.900l3.900 -3.400 4 3.400"/></g><path d="M1117.100 751l5.900 -5.800 5.800 5.800" fill="none" stroke="#fff" stroke-width="1.300"/><rect x="1143.300" y="744.600" width="11" height="8" fill="none" stroke="#fff" stroke-width="1.200"/><rect x="1154.800" y="747" width="1.200" height="3.200" fill="#fff"/><rect x="1145" y="746.300" width="8" height="4.600" fill="#fff"/><path d="M1140 742v2.500M1142.300 742v2.500M1139.200 744.800h3.900v2q-1.950 2 -3.900 0zM1141.200 748.500v3.500h2" fill="none" stroke="#fff" stroke-width="1.100"/><g fill="none" stroke="#fff" stroke-width="1.250"><path d="M1166 753.600a10.500 10.500 0 0 1 10.500 -10.500" opacity=".6"/><path d="M1169.100 753.600a7.400 7.400 0 0 1 7.400 -7.400"/><path d="M1172.300 753.600a4.200 4.200 0 0 1 4.200 -4.200"/></g><circle cx="1176.500" cy="753.600" r="1.400" fill="#fff"/><path d="M1187.200 745.300h2.600l3 -3.200v12l-3 -3.200h-2.600z" fill="none" stroke="#fff" stroke-width="1.150"/><g fill="none" stroke="#fff" stroke-width="1.100"><path d="M1195.500 745.300q1.600 2.800 0 5.600"/><path d="M1198 743.300q3 4.800 0 9.600"/><path d="M1200.500 741.300q4.400 6.800 0 13.600"/></g></svg><span class="t" style="left:1217.50px;top:735.00px;font-size:11.50px;color:#fff;transform:scaleX(0.8362);transform-origin:0 0;">VIE</span><span class="t" style="left:1218.80px;top:752.00px;font-size:11.50px;color:#fff;transform:scaleX(0.8137);transform-origin:0 0;">US</span><span class="t" style="left:1256.80px;top:734.00px;font-size:12.00px;color:#fff;transform:scaleX(0.8629);transform-origin:0 0;">10:52 SA</span><span class="t" style="left:1248.80px;top:751.00px;font-size:12.00px;color:#fff;transform:scaleX(0.9675);transform-origin:0 0;">24/03/2018</span><svg width="1366" height="768" viewBox="0 0 1366 768"><path d="M1324.500 740.500h16.500v11.500h-9.500l-3 3v-3h-4z" fill="#fff"/><path d="M1327.500 743.500h10.500M1327.500 746h10.500M1327.500 748.500h7" stroke="#15170f" stroke-width="1"/><circle cx="1340.700" cy="755.300" r="7.300" fill="#2b2b2b" stroke="#555" stroke-width="1.300"/></svg><span class="t" style="left:1337.80px;top:751.00px;font-size:11.50px;color:#fff;font-weight:bold;transform:scaleX(0.8913);transform-origin:0 0;">1</span></body></html>
